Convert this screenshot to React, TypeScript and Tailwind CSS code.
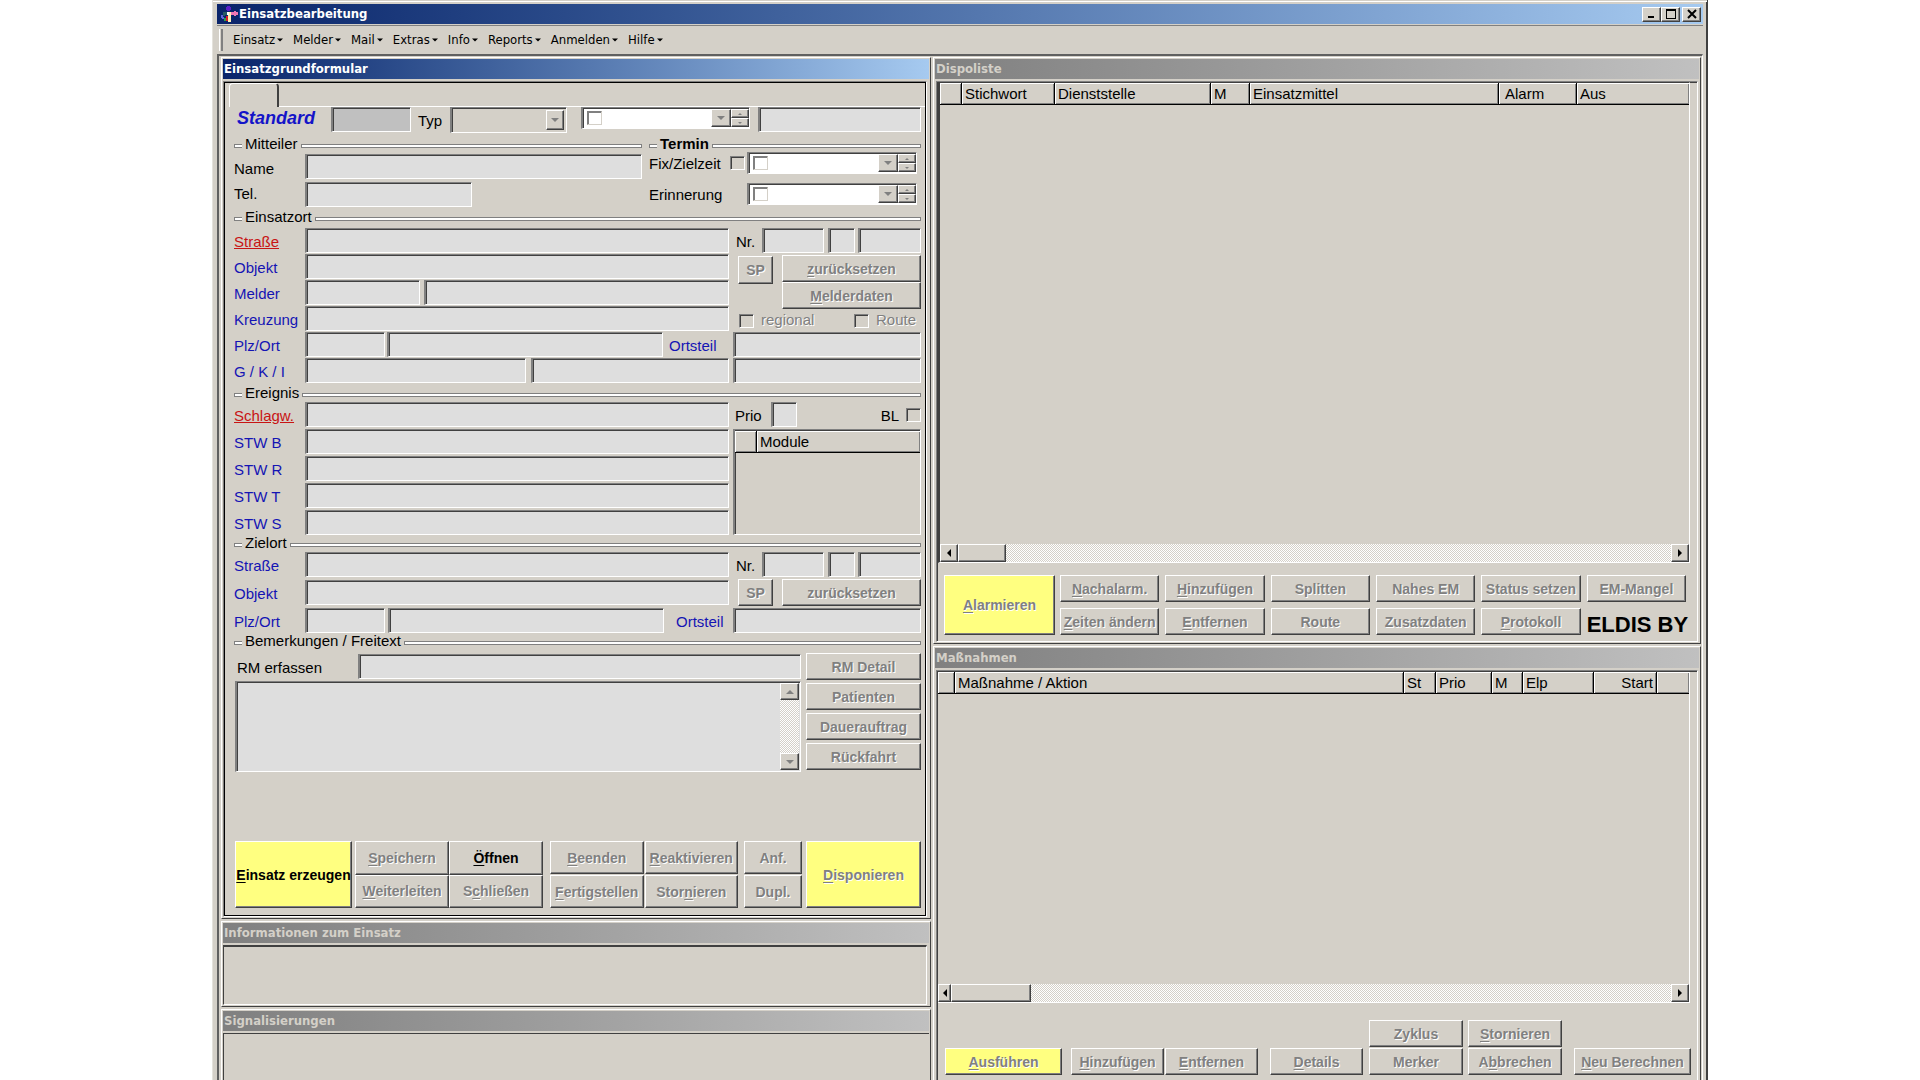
// Libraries
import React from 'react';
import clsx from 'clsx';

type TColumn = {
  title: string;
  width?: string;
  cell?: string;
}

type TButtonProps = {
  label: string;
  className?: string;
  active?: boolean;
  yellow?: boolean;
}

const MENU = ['Einsatz', 'Melder', 'Mail', 'Extras', 'Info', 'Reports', 'Anmelden', 'Hilfe']

const DISPO_COLUMNS: TColumn[] = [
  {title: '', width: 'w-[22px]'},
  {title: 'Stichwort', width: 'w-[93px]'},
  {title: 'Dienststelle', width: 'w-[156px]'},
  {title: 'M', width: 'w-[39px]'},
  {title: 'Einsatzmittel'},
  {title: 'Alarm', width: 'w-[78px]', cell: 'pl-1.5'},
  {title: 'Aus', width: 'w-[112px]'},
]

const ACTION_COLUMNS: TColumn[] = [
  {title: '', width: 'w-[17px]'},
  {title: 'Maßnahme / Aktion'},
  {title: 'St', width: 'w-[32px]'},
  {title: 'Prio', width: 'w-[56px]'},
  {title: 'M', width: 'w-[31px]'},
  {title: 'Elp', width: 'w-[71px]'},
  {title: 'Start', width: 'w-[63px]', cell: 'text-right'},
  {title: '', width: 'w-[32px]'},
]

const MODULE_COLUMNS: TColumn[] = [
  {title: '', width: 'w-[22px]'},
  {title: 'Module'},
]

const DISPO_BUTTONS = [
  '&Nachalarm.', '&Hinzufügen', 'Splitten', 'Nahes EM', 'Status setzen', 'EM-Mangel',
  '&Zeiten ändern', '&Entfernen', 'Route', 'Zusatzdaten', '&Protokoll',
]

const sunken = 'border border-l-2 border-t-[#808080] border-l-[#808080] border-r-white border-b-white shadow-[inset_1px_1px_0_#404040]'
const raised = 'border border-t-white border-l-white border-r-[#404040] border-b-[#404040] shadow-[inset_-1px_-1px_0_#808080]'

// The character after "&" is the underlined access key
function Mnemonic({label}: {label: string}) {
  const index = label.indexOf('&')
  if (index < 0) return <>{label}</>
  return (
    <>
      {label.slice(0, index)}<span className="underline underline-offset-2">{label[index + 1]}</span>{label.slice(index + 2)}
    </>
  )
}

function Button({label, className, active, yellow}: TButtonProps) {
  return (
    <button
      type="button"
      disabled={!active}
      className={clsx(
        'flex items-center justify-center whitespace-nowrap text-[14px] leading-4 font-bold',
        raised,
        yellow ? 'bg-[#ffff80]' : 'bg-[#d4d0c8]',
        active ? 'text-black' : 'text-[#808080] [text-shadow:1px_1px_0_#fff]',
        className
      )}
    >
      <span><Mnemonic label={label} /></span>
    </button>
  )
}

function Field({id, label, dark, className}: {id?: string, label?: string, dark?: boolean, className?: string}) {
  return (
    <input
      type="text"
      id={id}
      aria-label={label}
      className={clsx('h-[25px] min-w-0 px-1 text-[15px] outline-none', dark ? 'bg-[#c0c0c0]' : 'bg-[#dedede]', sunken, className)}
    />
  )
}

function Check({id, label, white}: {id?: string, label?: string, white?: boolean}) {
  return (
    <input
      type="checkbox"
      id={id}
      aria-label={label}
      className={clsx(
        'h-[14px] w-[15px] shrink-0 appearance-none border border-t-[#808080] border-l-[#808080]',
        white
          ? 'border-r-[#d4d0c8] border-b-[#d4d0c8] bg-white shadow-[inset_1px_1px_0_#808080]'
          : 'border-r-white border-b-white bg-[#d4d0c8] shadow-[inset_1px_1px_0_#404040]'
      )}
    />
  )
}

function Arrow({dir, className}: {dir: 'up' | 'down' | 'left' | 'right', className?: string}) {
  const points = {
    up: '0,6 4,2 8,6',
    down: '0,2 8,2 4,6',
    left: '6,0 2,4 6,8',
    right: '2,0 6,4 2,8',
  }
  return (
    <svg viewBox="0 0 8 8" className={className} fill="currentColor" aria-hidden="true">
      <polygon points={points[dir]} />
    </svg>
  )
}

function ArrowButton({dir, label, className, icon}: {dir: 'up' | 'down' | 'left' | 'right', label: string, className?: string, icon?: string}) {
  return (
    <button type="button" aria-label={label} className={clsx('flex shrink-0 items-center justify-center bg-[#d4d0c8]', raised, className)}>
      <Arrow dir={dir} className={icon || 'size-2'} />
    </button>
  )
}

function DateField({id, label, className}: {id?: string, label: string, className?: string}) {
  return (
    <div className={clsx('flex h-[22px] min-w-0 items-center bg-white pl-1', sunken, className)}>
      <Check white label={label + ' aktiv'} />
      <input type="text" id={id} aria-label={label} className="h-4 w-0 min-w-0 flex-1 bg-white px-1 text-[15px] outline-none" />
      <ArrowButton dir="down" label={label + ' Kalender'} className="h-[18px] w-5 text-[#808080]" />
      <div className="flex w-[18px] flex-col">
        <ArrowButton dir="up" label={label + ' später'} className="h-[9px] text-[#808080]" icon="size-1" />
        <ArrowButton dir="down" label={label + ' früher'} className="h-[9px] text-[#808080]" icon="size-1" />
      </div>
    </div>
  )
}

function Label({htmlFor, required, dark, className, children}: {htmlFor: string, required?: boolean, dark?: boolean, className?: string, children: React.ReactNode}) {
  return (
    <label
      htmlFor={htmlFor}
      className={clsx(
        'shrink-0 whitespace-nowrap pt-0.5 text-[15px] leading-5',
        required ? 'text-[#c81414] underline' : dark ? 'text-black' : 'text-[#1414b4]',
        className || 'w-[71px]'
      )}
    >
      {children}
    </label>
  )
}

function Legend({title, className}: {title: string, className?: string}) {
  return (
    <div className="flex h-4 items-center">
      <div className="mt-1 h-1 w-2 border border-r-0 border-[#808080] bg-white" />
      <h3 className={clsx('px-[3px] text-[15px] leading-4 whitespace-nowrap', className)}>{title}</h3>
      <div className="mt-1 h-1 flex-1 border border-[#808080] bg-white" />
    </div>
  )
}

function DataTable({columns}: {columns: TColumn[]}) {
  return (
    <table className="w-full table-fixed border-separate border-spacing-0">
      <colgroup>
        {columns.map((column, index) => <col key={index} className={column.width} />)}
      </colgroup>
      <thead>
        <tr>
          {columns.map((column, index) => (
            <th
              key={index}
              className={clsx(
                'h-[22px] border-r border-b border-black p-0 px-[3px] text-left text-[15px] leading-[18px] font-normal whitespace-nowrap shadow-[inset_1px_1px_0_#fff,inset_-1px_-1px_0_#808080] last:border-r-0',
                column.cell
              )}
            >{column.title}</th>
          ))}
        </tr>
      </thead>
    </table>
  )
}

function ScrollBar({thumb, start}: {thumb: string, start: string}) {
  return (
    <div className="flex h-[18px] bg-[conic-gradient(#fff_25%,#d4d0c8_0_50%,#fff_0_75%,#d4d0c8_0)] bg-[length:2px_2px]">
      <ArrowButton dir="left" label="Nach links" className={start} />
      <div className={clsx('bg-[#d4d0c8]', raised, thumb)} />
      <div className="flex-1" />
      <ArrowButton dir="right" label="Nach rechts" className="w-[18px]" />
    </div>
  )
}

function Panel({title, active, className, children}: {title: string, active?: boolean, className?: string, children: React.ReactNode}) {
  return (
    <section className={clsx('flex flex-col border border-t-white border-l-white border-r-[#404040] border-b-[#404040] bg-[#d4d0c8] p-px', className)}>
      <h2
        className={clsx(
          'h-5 bg-linear-to-r pl-px font-["DejaVu_Sans_Condensed","DejaVu_Sans",sans-serif] text-[13px] leading-5 font-bold',
          active ? 'from-[#0a246a] to-[#a6caf0] text-white' : 'from-[#808080] to-[#c0c0c0] text-[#d4d0c8]'
        )}
      >{title}</h2>
      {children}
    </section>
  )
}

function HouseNumber({prefix}: {prefix: string}) {
  return (
    <div className="flex items-center pl-[3px]">
      <Label htmlFor={prefix + '-nr'} dark className="w-[26px]">Nr.</Label>
      <Field id={prefix + '-nr'} className="w-[62px]" />
      <Field label="Zusatz" className="ml-1 w-[27px]" />
      <Field label="Abschnitt" className="ml-[3px] w-0 flex-1" />
    </div>
  )
}

function Row({id, label, required, children}: {id: string, label: string, required?: boolean, children?: React.ReactNode}) {
  return (
    <div className="flex items-center">
      <Label htmlFor={id} required={required}>{label}</Label>
      {children || <Field id={id} className="flex-1" />}
    </div>
  )
}

function MissionForm() {
  return (
    <Panel title="Einsatzgrundformular" active>
      <div className="mt-0.5 mr-0.5 border border-t-[#808080] border-l-[#808080] border-r-white border-b-white">
        <div className="border border-black pb-[7px]">
          <div className="flex h-6 pl-1">
            <div className="w-[50px] rounded-t-sm border-t border-l border-r-2 border-t-white border-l-white border-r-[#404040]" />
            <div className="flex-1 border-b border-white" />
          </div>
          <form className="pr-1 pl-[9px]">
            <div className="flex h-[26px] items-start">
              <label htmlFor="standard" className="w-[97px] pl-[3px] text-[18px] leading-[22px] font-bold text-[#1414c8] italic">Standard</label>
              <Field id="standard" dark className="w-20" />
              <Label htmlFor="typ" dark className="ml-[7px] w-8 pt-1">Typ</Label>
              <div className="relative w-[117px]">
                <select id="typ" className={clsx('h-[26px] w-full appearance-none bg-[#d4d0c8]', sunken)} />
                <span className={clsx('pointer-events-none absolute top-[3px] right-[3px] flex h-5 w-[18px] items-center justify-center bg-[#d4d0c8] text-[#808080]', raised)}>
                  <Arrow dir="down" className="size-2" />
                </span>
              </div>
              <DateField label="Zeitpunkt" className="ml-[14px] w-[169px]" />
              <Field label="Einsatznummer" className="ml-2 flex-1" />
            </div>

            <div className="mt-[3px] flex gap-[7px]">
              <div className="min-w-0 flex-1">
                <Legend title="Mitteiler" />
                <div className="flex flex-col gap-[3px] pt-0.5">
                  <div className="flex items-end">
                    <Label htmlFor="name" dark>Name</Label>
                    <Field id="name" className="flex-1" />
                  </div>
                  <div className="flex items-start">
                    <Label htmlFor="tel" dark>Tel.</Label>
                    <Field id="tel" className="w-[167px]" />
                  </div>
                </div>
              </div>
              <div className="w-[272px]">
                <Legend title="Termin" className="px-3 font-bold" />
                <div className="flex flex-col gap-[9px] pr-1">
                  <div className="flex items-center">
                    <Label htmlFor="fix" dark className="w-[81px]">Fix/Zielzeit</Label>
                    <Check label="Fix" />
                    <DateField id="fix" label="Zielzeit" className="ml-0.5 flex-1" />
                  </div>
                  <div className="flex items-center">
                    <Label htmlFor="erinnerung" dark className="w-[98px]">Erinnerung</Label>
                    <DateField id="erinnerung" label="Erinnerung" className="flex-1" />
                  </div>
                </div>
              </div>
            </div>

            <div className="mt-0.5">
              <Legend title="Einsatzort" />
              <div className="mt-[3px] grid grid-cols-[minmax(0,1fr)_188px] gap-1">
                <div className="flex flex-col gap-px">
                  <Row id="strasse" label="Straße" required />
                  <Row id="objekt" label="Objekt" />
                  <Row id="melder" label="Melder">
                    <Field id="melder" className="w-[115px]" />
                    <Field label="Meldername" className="ml-1 flex-1" />
                  </Row>
                  <Row id="kreuzung" label="Kreuzung" />
                  <Row id="plz" label="Plz/Ort">
                    <Field id="plz" className="w-20" />
                    <Field label="Ort" className="ml-0.5 flex-1" />
                    <Label htmlFor="ortsteil" className="w-[66px] pl-1.5">Ortsteil</Label>
                  </Row>
                  <Row id="gki" label="G / K / I">
                    <Field id="gki" className="w-[221px]" />
                    <Field label="Kreis" className="ml-[5px] flex-1" />
                  </Row>
                </div>
                <div className="flex flex-col">
                  <HouseNumber prefix="einsatzort" />
                  <div className="mt-0.5 flex h-[54px] items-start gap-[9px] pl-[5px]">
                    <Button label="SP" className="mt-px h-7 w-[35px]" />
                    <div className="flex flex-1 flex-col">
                      <Button label="&zurücksetzen" className="h-[27px]" />
                      <Button label="&Melderdaten" className="h-[27px]" />
                    </div>
                  </div>
                  <div className="flex h-[23px] items-center pl-1.5 text-[15px] text-[#808080] [text-shadow:1px_1px_0_#fff]">
                    <Check id="regional" />
                    <label htmlFor="regional" className="w-[100px] pl-[7px]">regional</label>
                    <Check id="route" />
                    <label htmlFor="route" className="pl-[7px]">Route</label>
                  </div>
                  <Field id="ortsteil" />
                  <Field label="Information" className="mt-px" />
                </div>
              </div>
            </div>

            <div className="mt-0.5">
              <Legend title="Ereignis" />
              <div className="mt-px grid grid-cols-[minmax(0,1fr)_188px] gap-1">
                <div className="flex flex-col gap-0.5">
                  <Row id="schlagwort" label="Schlagw." required />
                  <Row id="stw-b" label="STW B" />
                  <Row id="stw-r" label="STW R" />
                  <Row id="stw-t" label="STW T" />
                  <Row id="stw-s" label="STW S" />
                </div>
                <div className="flex flex-col">
                  <div className="flex items-center pl-0.5">
                    <Label htmlFor="prio" dark className="w-9">Prio</Label>
                    <Field id="prio" className="w-[26px]" />
                    <Label htmlFor="bl" dark className="mr-[7px] ml-auto">BL</Label>
                    <Check id="bl" />
                  </div>
                  <div className={clsx('mt-0.5 flex-1 pt-px', sunken)}>
                    <DataTable columns={MODULE_COLUMNS} />
                  </div>
                </div>
              </div>
            </div>

            <div>
              <Legend title="Zielort" />
              <div className="mt-px grid grid-cols-[minmax(0,1fr)_188px] gap-1">
                <div className="flex flex-col gap-[3px]">
                  <Row id="ziel-strasse" label="Straße" />
                  <Row id="ziel-objekt" label="Objekt" />
                  <Row id="ziel-plz" label="Plz/Ort">
                    <Field id="ziel-plz" className="w-20" />
                    <Field label="Ort" className="ml-[3px] flex-1" />
                    <Label htmlFor="ziel-ortsteil" className="w-[65px] pl-3">Ortsteil</Label>
                  </Row>
                </div>
                <div className="flex flex-col">
                  <HouseNumber prefix="zielort" />
                  <div className="mt-0.5 mb-0.5 flex items-start gap-[9px] pl-[5px]">
                    <Button label="SP" className="h-[27px] w-[35px]" />
                    <Button label="zurücksetzen" className="h-[27px] flex-1" />
                  </div>
                  <Field id="ziel-ortsteil" />
                </div>
              </div>
            </div>

            <Legend title="Bemerkungen / Freitext" />
            <div className="mt-1 grid grid-cols-[minmax(0,1fr)_115px] gap-[5px]">
              <div className="flex flex-col gap-0.5 pt-px pl-px">
                <div className="flex items-center">
                  <Label htmlFor="rm" dark className="w-[123px] pl-0.5">RM erfassen</Label>
                  <Field id="rm" className="flex-1" />
                </div>
                <div className={clsx('flex h-[91px] bg-[#dedede] p-px', sunken)}>
                  <textarea aria-label="Freitext" className="min-w-0 flex-1 resize-none bg-[#dedede] text-[15px] outline-none" />
                  <div className="flex w-[19px] flex-col justify-between bg-[conic-gradient(#fff_25%,#d4d0c8_0_50%,#fff_0_75%,#d4d0c8_0)] bg-[length:2px_2px]">
                    <ArrowButton dir="up" label="Nach oben" className="h-[17px] text-[#808080]" />
                    <ArrowButton dir="down" label="Nach unten" className="h-[17px] text-[#808080]" />
                  </div>
                </div>
              </div>
              <div className="flex flex-col gap-[3px]">
                <Button label="RM Detail" className="h-[27px]" />
                <Button label="Patienten" className="h-[27px]" />
                <Button label="Dauerauftrag" className="h-[27px]" />
                <Button label="Rückfahrt" className="h-[27px]" />
              </div>
            </div>

            <div className="mt-[69px] flex h-[67px] pl-px">
              <Button label="&Einsatz erzeugen" active yellow className="w-[117px]" />
              <div className="ml-[3px] grid w-[188px] grid-cols-2">
                <Button label="&Speichern" />
                <Button label="&Öffnen" active />
                <Button label="&Weiterleiten" />
                <Button label="S&chließen" />
              </div>
              <div className="ml-[7px] grid w-[188px] grid-cols-2 gap-px">
                <Button label="&Beenden" />
                <Button label="&Reaktivieren" />
                <Button label="&Fertigstellen" />
                <Button label="Stor&nieren" />
              </div>
              <div className="ml-1.5 grid w-[58px] gap-px">
                <Button label="Anf." />
                <Button label="Dupl." />
              </div>
              <Button label="&Disponieren" yellow className="ml-1 flex-1" />
            </div>
          </form>
        </div>
      </div>
    </Panel>
  )
}

function DispoList() {
  return (
    <Panel title="Dispoliste">
      <div className="mt-0.5 mr-px ml-px border border-t-[#808080] border-l-[#808080] border-r-white border-b-white pb-1.5 pl-px shadow-[inset_1px_1px_0_#404040]">
        <div className="mr-[7px] border border-l-2 border-t-[#404040] border-l-[#404040] border-r-white border-b-white">
          <div className="h-[461px]">
            <DataTable columns={DISPO_COLUMNS} />
          </div>
          <ScrollBar start="w-[18px]" thumb="w-12" />
        </div>
        <div className="mt-3 mr-[11px] ml-1.5 flex gap-[5px]">
          <Button label="&Alarmieren" yellow className="w-[111px]" />
          <div className="grid flex-1 grid-cols-6 gap-1.5">
            {DISPO_BUTTONS.map((label) => <Button key={label} label={label} className="h-[27px]" />)}
            <strong className="h-[27px] text-[22px] leading-[34px] whitespace-nowrap">ELDIS BY</strong>
          </div>
        </div>
      </div>
    </Panel>
  )
}

function ActionList() {
  return (
    <Panel title="Maßnahmen" className="flex-1 border-b-0 pb-0">
      <div className="mt-0.5 mr-px ml-px flex flex-1 flex-col border border-b-0 border-t-[#808080] border-l-[#808080] border-r-white pt-px pb-[5px] pl-px shadow-[inset_1px_1px_0_#404040]">
        <div className="mr-[7px] flex flex-1 flex-col border-r border-b border-white">
          <div className="flex-1">
            <DataTable columns={ACTION_COLUMNS} />
          </div>
          <ScrollBar start="w-[13px]" thumb="w-20" />
        </div>
        <div className="mt-[17px] flex items-end pl-[7px]">
          <Button label="&Ausführen" yellow className="h-[27px] w-[117px]" />
          <Button label="&Hinzufügen" className="ml-[9px] h-[27px] w-[93px]" />
          <Button label="&Entfernen" className="ml-px h-[27px] w-[93px]" />
          <Button label="&Details" className="ml-3 h-[27px] w-[93px]" />
          <div className="ml-1.5 flex w-[94px] flex-col gap-px">
            <Button label="Zyklus" className="h-[27px]" />
            <Button label="Merker" className="h-[27px]" />
          </div>
          <div className="ml-[5px] flex w-[94px] flex-col gap-px">
            <Button label="&Stornieren" className="h-[27px]" />
            <Button label="A&bbrechen" className="h-[27px]" />
          </div>
          <Button label="&Neu Berechnen" className="ml-3 h-[27px] w-[117px]" />
        </div>
      </div>
    </Panel>
  )
}

function TitleBar() {
  return (
    <header className="flex h-5 items-center bg-linear-to-r from-[#0a246a] to-[#a6caf0] pr-0.5 pl-1 text-white">
      <svg viewBox="0 0 18 18" className="size-[18px]" aria-hidden="true">
        <path d="M6 1h3v1h1v3H9v1H6V5H5V2h1z" fill="#5a1ec8" />
        <path d="M10 7h3V6h2v1h2v3h-2v1h-2v-1h-3z" fill="#f078b4" />
        <path d="M2 7h4v3H4v1H2z" fill="#285a64" />
        <path d="M0 10h2v2h1v2H1v-1H0z" fill="#6464dc" />
        <path d="M3 13h3v3H3z" fill="#28a046" />
        <path d="M5 11h3v5H5z" fill="#dc1e28" />
        <path d="M7 7h3v10H7z" fill="#fff0b4" />
        <path d="M6 7h2v3H6z" fill="#fff" />
      </svg>
      <h1 className='flex-1 font-["DejaVu_Sans_Condensed","DejaVu_Sans",sans-serif] text-[13px] leading-5 font-bold'>Einsatzbearbeitung</h1>
      <div className="flex text-black">
        <button type="button" aria-label="Minimieren" className={clsx('flex h-[15px] w-[19px] items-center justify-center bg-[#d4d0c8]', raised)}>
          <svg viewBox="0 0 10 10" className="size-2.5"><path d="M1 7h6v2H1z" /></svg>
        </button>
        <button type="button" aria-label="Maximieren" className={clsx('flex h-[15px] w-[19px] items-center justify-center bg-[#d4d0c8]', raised)}>
          <svg viewBox="0 0 10 10" className="size-2.5"><path d="M0 0h10v10H0zM1 2v7h8V2z" fillRule="evenodd" /></svg>
        </button>
        <button type="button" aria-label="Schließen" className={clsx('ml-0.5 flex h-[15px] w-[19px] items-center justify-center bg-[#d4d0c8]', raised)}>
          <svg viewBox="0 0 10 10" className="size-2.5"><path d="M1 1l8 8M9 1L1 9" stroke="#000" strokeWidth="2" /></svg>
        </button>
      </div>
    </header>
  )
}

function App() {
  return (
    <div className='min-h-screen bg-white font-["Liberation_Sans",Arial,sans-serif] text-black'>
      <div className="mx-auto flex min-h-screen w-full max-w-[1496px] flex-col border-r-2 border-l border-r-[#404040] border-l-[#e4e2dc] bg-[#d4d0c8] pr-[3px] pl-1">
        <div className="-mx-1 mb-0.5 h-0.5 border-t border-[#d4d0c8] bg-white" />
        <TitleBar />
        <nav className='mt-px flex h-[29px] items-center border-t border-[#808080] pl-0.5 font-["DejaVu_Sans_Condensed","DejaVu_Sans",sans-serif] text-[13px]'>
          <div className="mr-[10px] h-[22px] w-1 border-r-2 border-l border-r-[#808080] border-l-white" />
          <div className="flex gap-[10px]">
            {MENU.map((item) => (
              <button type="button" key={item} className="flex items-center gap-0.5">
                {item}
                <Arrow dir="down" className="size-1.5" />
              </button>
            ))}
          </div>
        </nav>
        <main className="grid flex-1 grid-cols-[710fr_768fr] gap-0.5 border-t-2 border-r border-l-2 border-t-[#606060] border-r-white border-l-[#606060] pt-px pr-px pl-0.5">
          <div className="flex min-w-0 flex-col gap-0.5">
            <MissionForm />
            <Panel title="Informationen zum Einsatz">
              <div className="mt-0.5 mr-0.5 h-[60px] border border-t-2 border-t-[#404040] border-l-[#404040] border-r-white border-b-white" />
            </Panel>
            <Panel title="Signalisierungen" className="flex-1 border-b-0 pb-0">
              <div className="mt-0.5 flex-1 border-t border-l border-[#404040]" />
            </Panel>
          </div>
          <div className="flex min-w-0 flex-col gap-0.5">
            <DispoList />
            <ActionList />
          </div>
        </main>
      </div>
    </div>
  )
}


export default App
